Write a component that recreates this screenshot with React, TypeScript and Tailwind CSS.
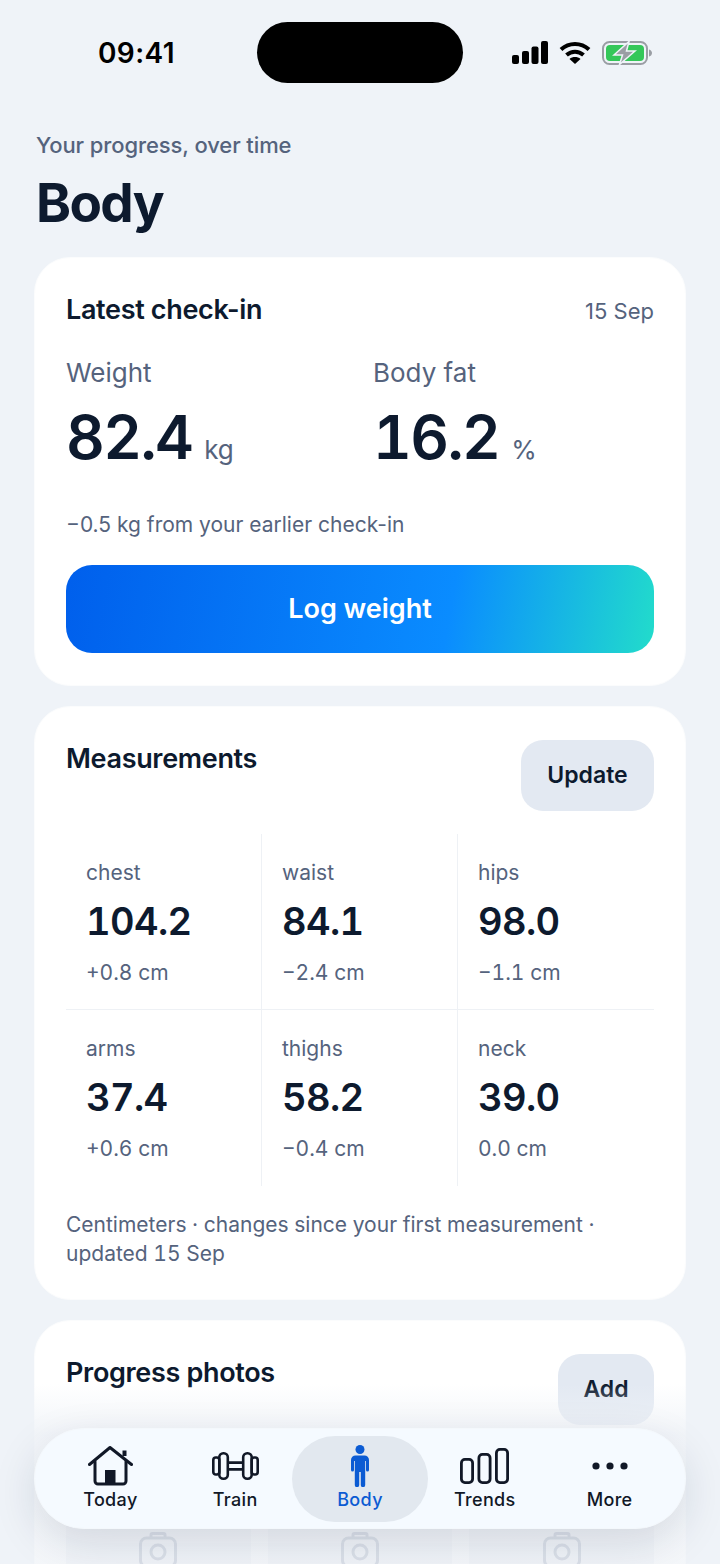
import type { ReactNode } from "react";

const measurements = [
  { name: "chest", value: "104.2", delta: "+0.8 cm" },
  { name: "waist", value: "84.1", delta: "−2.4 cm" },
  { name: "hips", value: "98.0", delta: "−1.1 cm" },
  { name: "arms", value: "37.4", delta: "+0.6 cm" },
  { name: "thighs", value: "58.2", delta: "−0.4 cm" },
  { name: "neck", value: "39.0", delta: "0.0 cm" },
];

function StatusIcons() {
  return (
    <div className="flex items-center gap-[11px]">
      <svg width="36" height="23" viewBox="0 0 36 23" fill="#000">
        <rect x="0" y="14" width="7" height="9" rx="2" />
        <rect x="10" y="10" width="7" height="13" rx="2" />
        <rect x="19.5" y="5.5" width="7" height="17.5" rx="2" />
        <rect x="29" y="0" width="7" height="23" rx="2" />
      </svg>
      <svg width="32" height="23" viewBox="0 0 32 23" fill="none" stroke="#000" strokeWidth="4">
        <path d="M2 8.5C10 1 22 1 30 8.5" />
        <path d="M7.5 14c5-4.5 12-4.5 17 0" />
        <path d="M16 23l-5.5-5c3-2.6 8-2.6 11 0z" fill="#000" stroke="none" />
      </svg>
      <svg width="51" height="24" viewBox="0 0 51 24">
        <rect x="1" y="1" width="44" height="22" rx="6.5" fill="none" stroke="#9a9ea4" strokeWidth="2" />
        <rect x="4" y="4" width="38" height="16" rx="4" fill="#34c759" />
        <path d="M47 8.5c2 .5 3 2 3 3.5s-1 3-3 3.5z" fill="#9a9ea4" />
        <path d="M27 0.5L12 14h8.5l-3 9.5L33 10h-8.5z" fill="#9a9ea4" stroke="#eff3f8" strokeWidth="1.5" />
      </svg>
    </div>
  );
}

function HomeIcon() {
  return (
    <svg width="45" height="40" viewBox="0 0 45 40" fill="none" stroke="#111827" strokeWidth="3" strokeLinecap="round" strokeLinejoin="round">
      <path d="M1.5 18.5L22 1.5l21.5 17" />
      <path d="M7 15.5V35a3 3 0 0 0 3 3h25a3 3 0 0 0 3-3V15.5" />
      <path d="M36.5 10V4.5" strokeWidth="4" strokeLinecap="butt" />
      <rect x="17" y="24" width="10.5" height="14" fill="#111827" stroke="none" />
    </svg>
  );
}

function DumbbellIcon() {
  return (
    <svg width="47" height="28" viewBox="0 0 47 28" fill="none" stroke="#111827" strokeWidth="2.6" strokeLinejoin="round">
      <rect x="1.3" y="5.5" width="6" height="17" rx="2.5" />
      <rect x="7.3" y="1.3" width="8.5" height="25.4" rx="4" />
      <rect x="31.2" y="1.3" width="8.5" height="25.4" rx="4" />
      <rect x="39.7" y="5.5" width="6" height="17" rx="2.5" />
      <path d="M15.8 10.6h15.4M15.8 17.4h15.4" />
    </svg>
  );
}

function PersonIcon() {
  return (
    <svg width="18" height="42" viewBox="0 0 18 42" fill="#0b5bd3">
      <circle cx="9" cy="4.5" r="4.5" />
      <path d="M4.5 10.5h9a4.5 4.5 0 0 1 4.5 4.5v10a1.5 1.5 0 0 1-3 0v-9h-.8v24a2.2 2.2 0 0 1-4.4 0V27H8.2v13a2.2 2.2 0 0 1-4.4 0V16H3v9a1.5 1.5 0 0 1-3 0V15a4.5 4.5 0 0 1 4.5-4.5z" />
    </svg>
  );
}

function TrendsIcon() {
  return (
    <svg width="49" height="36" viewBox="0 0 49 36" fill="none" stroke="#111827" strokeWidth="2.8">
      <rect x="1.4" y="11.4" width="11.2" height="23.2" rx="3.5" />
      <rect x="18.9" y="6.4" width="11.2" height="28.2" rx="3.5" />
      <rect x="36.4" y="1.4" width="11.2" height="33.2" rx="3.5" />
    </svg>
  );
}

function DotsIcon() {
  return (
    <svg width="36" height="8" viewBox="0 0 36 8" fill="#111827">
      <circle cx="4" cy="4" r="3.6" />
      <circle cx="18" cy="4" r="3.6" />
      <circle cx="32" cy="4" r="3.6" />
    </svg>
  );
}

function CameraIcon() {
  return (
    <svg width="38" height="36" viewBox="0 0 38 36" fill="none" stroke="#b5bdcc" strokeWidth="3">
      <rect x="1.5" y="6" width="35" height="28.5" rx="6" />
      <path d="M12 6V3a1.5 1.5 0 0 1 1.5-1.5h11A1.5 1.5 0 0 1 26 3v3" />
      <circle cx="19" cy="20" r="7" />
    </svg>
  );
}

function Card({ className, children }: { className: string; children: ReactNode }) {
  return (
    <section className={`rounded-[36px] border border-[#fbfcfd] bg-white px-[31px] pt-[33px] ${className}`}>
      {children}
    </section>
  );
}

function TabItem({ icon, label, active }: { icon: ReactNode; label: string; active?: boolean }) {
  return (
    <div
      className={`flex h-[86px] flex-col items-center rounded-[43px] pt-[10px] ${
        active ? "-mx-[6px] bg-[#e2e8ef] text-[#0b5bd3]" : "text-[#111827]"
      }`}
    >
      <div className="flex h-[40px] w-full items-center justify-center">{icon}</div>
      <span className="mt-[3px] text-[18px] leading-[22px] font-medium tracking-[0.35px]">{label}</span>
    </div>
  );
}

export default function App() {
  return (
    <div className="relative h-[1564px] w-[720px] overflow-hidden bg-[#eff3f8] font-['Inter',sans-serif] text-[#0d1a2e]">
      {/* Status bar */}
      <div className="flex items-center pt-[22px] pr-[67px] pl-[98px]">
        <span className="w-[159px] text-[28px] leading-[34px] font-semibold tracking-[0.4px] text-black">09:41</span>
        <div className="h-[61px] w-[206px] rounded-[31px] bg-black" />
        <div className="flex flex-1 justify-end">
          <StatusIcons />
        </div>
      </div>

      {/* Heading */}
      <div className="pt-[47px] pr-[36px] pl-[36px]">
        <p className="text-[22px] leading-[30px] font-medium tracking-[-0.1px] text-[#55637d]">Your progress, over time</p>
        <h1 className="mt-[13px] text-[53px] leading-[60px] font-bold tracking-[-1.6px] text-[#0d1a2e]">Body</h1>
      </div>

      <div className="mt-[24px] flex flex-col gap-[20px] px-[34px]">
        {/* Latest check-in */}
        <Card className="h-[429px]">
          <div className="flex items-center justify-between">
            <h2 className="text-[27px] leading-[38px] font-semibold tracking-[-0.33px]">Latest check-in</h2>
            <span className="pt-[1px] text-[22px] leading-[30px] text-[#55637d]">15 Sep</span>
          </div>
          <div className="mt-[26px] grid grid-cols-[307px_1fr]">
            <div>
              <p className="text-[26px] leading-[36px] text-[#55637d]">Weight</p>
              <p className="mt-[9px] flex items-baseline gap-[12px] leading-[74px]">
                <span className="text-[60px] font-semibold tracking-[-1.6px] tabular-nums">82.4</span>
                <span className="text-[26px] text-[#55637d]">kg</span>
              </p>
            </div>
            <div>
              <p className="text-[26px] leading-[36px] text-[#55637d]">Body fat</p>
              <p className="mt-[9px] flex items-baseline gap-[12px] leading-[74px]">
                <span className="text-[60px] font-semibold tracking-[-1.6px] tabular-nums">16.2</span>
                <span className="text-[26px] text-[#55637d]">%</span>
              </p>
            </div>
          </div>
          <p className="mt-[23px] text-[21px] leading-[30px] text-[#55637d]">−0.5 kg from your earlier check-in</p>
          <button className="mt-[25px] h-[88px] w-full rounded-[26px] bg-[linear-gradient(100deg,#005fec_0%,#0a8cff_65%,#22dccb_100%)] text-[27px] font-semibold text-white">
            Log weight
          </button>
        </Card>

        {/* Measurements */}
        <Card className="h-[594px]">
          <div className="flex items-start justify-between">
            <h2 className="text-[27px] leading-[38px] font-semibold tracking-[-0.33px]">Measurements</h2>
            <button className="h-[71px] w-[133px] rounded-[22px] bg-[#e3e9f2] text-[23px] font-semibold text-[#0d1a2e]">
              Update
            </button>
          </div>
          <div className="mt-[23px] grid grid-cols-3">
            {measurements.map((m, i) => (
              <div
                key={m.name}
                className={`h-[176px] border-[#eef1f5] px-[20px] pt-[24px] ${i % 3 !== 2 ? "border-r" : ""} ${i < 3 ? "border-b" : ""}`}
              >
                <p className="text-[21px] leading-[30px] text-[#55637d]">{m.name}</p>
                <p className="mt-[9px] text-[38px] leading-[48px] font-semibold tracking-[-0.6px] tabular-nums">{m.value}</p>
                <p className="mt-[13px] text-[21px] leading-[30px] text-[#55637d] tabular-nums">{m.delta}</p>
              </div>
            ))}
          </div>
          <p className="mt-[24px] text-[21px] leading-[29px] text-[#55637d] tabular-nums">
            Centimeters · changes since your first measurement · updated 15 Sep
          </p>
        </Card>

        {/* Progress photos */}
        <Card className="h-[400px]">
          <div className="flex items-start justify-between">
            <h2 className="text-[27px] leading-[38px] font-semibold tracking-[-0.33px]">Progress photos</h2>
            <button className="h-[71px] w-[96px] rounded-[22px] bg-[#e3e9f2] text-[23px] font-semibold text-[#0d1a2e]">
              Add
            </button>
          </div>
          <div className="mt-[10px] grid grid-cols-3 gap-[17px]">
            {[0, 1, 2].map((n) => (
              <div key={n} className="flex h-[230px] items-center justify-center rounded-[20px] bg-[#f3f5f8]">
                <CameraIcon />
              </div>
            ))}
          </div>
        </Card>
      </div>

      {/* Fade under the tab bar */}
      <div className="absolute inset-x-0 bottom-0 h-[180px] bg-[linear-gradient(to_bottom,rgba(239,243,248,0)_0%,rgba(239,243,248,0.8)_28%,rgba(239,243,248,0.65)_50%,rgba(239,243,248,0.65)_100%)]" />

      {/* Tab bar */}
      <nav className="absolute top-[1428px] left-[34px] grid h-[101px] w-[652px] grid-cols-5 items-center rounded-[50px] border border-[#f4f8fc] bg-[#f5faff] px-[13px] shadow-[0_14px_44px_rgba(15,30,60,0.13)]">
        <TabItem icon={<HomeIcon />} label="Today" />
        <TabItem icon={<DumbbellIcon />} label="Train" />
        <TabItem icon={<PersonIcon />} label="Body" active />
        <TabItem icon={<TrendsIcon />} label="Trends" />
        <TabItem icon={<DotsIcon />} label="More" />
      </nav>
    </div>
  );
}
